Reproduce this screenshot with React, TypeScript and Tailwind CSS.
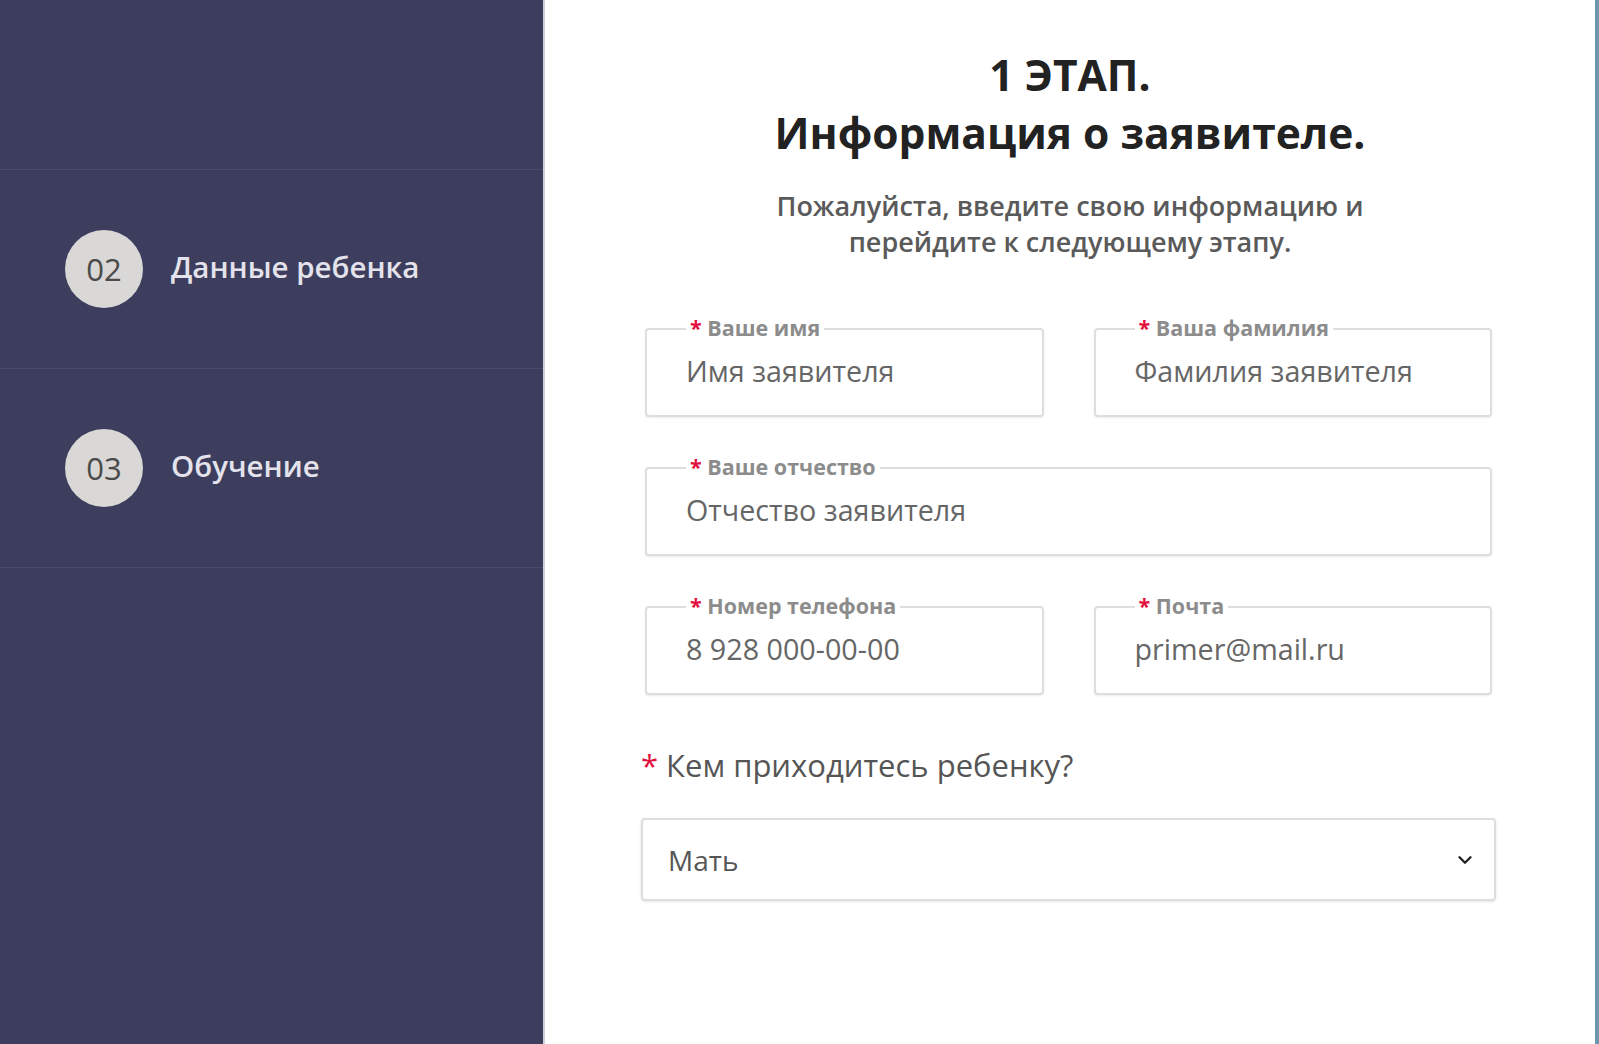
import { ChevronDown } from "lucide-react";

type Field = {
  label: string;
  value: string;
  wide?: boolean;
};

const fields: Field[] = [
  { label: "Ваше имя", value: "Имя заявителя" },
  { label: "Ваша фамилия", value: "Фамилия заявителя" },
  { label: "Ваше отчество", value: "Отчество заявителя", wide: true },
  { label: "Номер телефона", value: "8 928 000-00-00" },
  { label: "Почта", value: "primer@mail.ru" },
];

const steps = [
  { num: "02", title: "Данные ребенка" },
  { num: "03", title: "Обучение" },
];

function Step({ num, title }: { num: string; title: string }) {
  return (
    <div className="flex h-[199px] items-center gap-[28px] border-b border-[#4b4c6c] pl-[65px]">
      <div className="flex h-[78px] w-[78px] items-center justify-center rounded-full bg-[#d9d8d6] text-[31px] text-[#4a4a4a]">
        {num}
      </div>
      <span className="pb-[3px] text-[29.5px] font-semibold text-[#e4e3ec]">{title}</span>
    </div>
  );
}

function InputBox({ label, value, wide }: Field) {
  return (
    <div
      className={`relative flex h-[89px] items-center rounded-[4px] border-2 border-[#dedede] bg-white pl-[39px] shadow-[0_1px_2px_rgba(0,0,0,0.08)] ${
        wide ? "col-span-2" : ""
      }`}
    >
      <span className="absolute left-[39px] top-[-16px] bg-white px-[4px] text-[21.5px] leading-[28px] font-bold text-[#8c8c8c]">
        <span className="text-[#e3103e]">*</span> {label}
      </span>
      <span className="pb-[4px] text-[28.7px] text-[#666]">{value}</span>
    </div>
  );
}

export default function App() {
  return (
    <div
      className="flex h-[1044px] w-full overflow-hidden bg-white"
      style={{ fontFamily: '"Open Sans", "Noto Sans", sans-serif' }}
    >
      <aside className="flex w-[545px] shrink-0 flex-col border-r-2 border-[#cfd0da] bg-[#3d3e5e]">
        <div className="h-[170px] border-b border-[#4b4c6c]" />
        {steps.map((s) => (
          <Step key={s.num} num={s.num} title={s.title} />
        ))}
      </aside>

      <main className="flex flex-1 flex-col items-center border-r-4 border-[#6c98ad] pt-[46px]">
        <h1 className="text-center text-[42.5px] leading-[58px] font-bold text-[#222]">
          1 ЭТАП.
          <br />
          Информация о заявителе.
        </h1>
        <p className="mt-[26px] text-center text-[27px] leading-[36px] font-semibold text-[#5a5a5a]">
          Пожалуйста, введите свою информацию и
          <br />
          перейдите к следующему этапу.
        </p>

        <div className="mt-[68px] mr-[3px] w-[855px]">
          <div className="grid grid-cols-2 gap-x-[50px] gap-y-[50px] px-[4px]">
            {fields.map((f) => (
              <InputBox key={f.label} {...f} />
            ))}
          </div>

          <div className="mt-[50px] flex items-center text-[31px] leading-[40px] text-[#555]">
            <span className="mr-[8px] text-[#e3103e]">*</span>
            Кем приходитесь ребенку?
          </div>

          <div className="mt-[33px] flex h-[83px] items-center justify-between rounded-[4px] border-2 border-[#dedede] bg-white pl-[25px] pr-[18px] shadow-[0_1px_3px_rgba(0,0,0,0.1)]">
            <span className="text-[28px] text-[#555]">Мать</span>
            <ChevronDown className="h-[22px] w-[22px] text-[#222]" strokeWidth={2.6} />
          </div>
        </div>
      </main>
    </div>
  );
}
